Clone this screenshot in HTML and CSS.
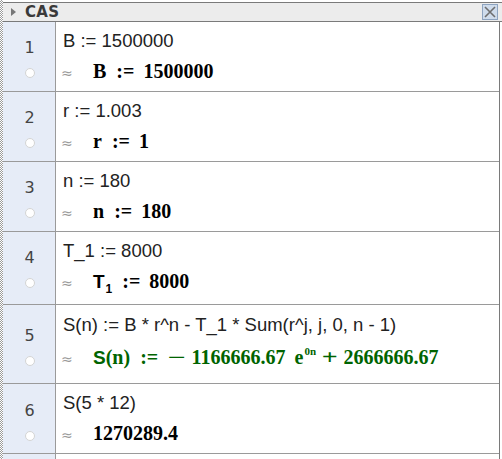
FILE: index.html
```html
<!DOCTYPE html>
<html>
<head>
<meta charset="utf-8">
<link rel="stylesheet" href="styles.css">
</head>
<body>
<div class="app">
  <div class="dots"></div>
  <div class="panel">
    <div class="header">
      <span class="tri"></span>
      <span class="title">CAS</span>
      <span class="close"><svg width="14" height="14" viewBox="0 0 14 14"><path d="M2 2 L12 12 M12 2 L2 12" stroke="#6f6f6f" stroke-width="1.6" fill="none"/></svg></span>
    </div>
    <div class="list">
      <div class="row">
        <div class="gut"><span class="num">1</span><span class="radio"></span></div>
        <div class="cell">
          <div class="inp">B := 1500000</div>
          <div class="out"><span class="ap">≈</span><span class="m">B<span class="op">:=</span>1500000</span></div>
        </div>
      </div>
      <div class="row">
        <div class="gut"><span class="num">2</span><span class="radio"></span></div>
        <div class="cell">
          <div class="inp">r := 1.003</div>
          <div class="out"><span class="ap">≈</span><span class="m">r<span class="op">:=</span>1</span></div>
        </div>
      </div>
      <div class="row">
        <div class="gut"><span class="num">3</span><span class="radio"></span></div>
        <div class="cell">
          <div class="inp">n := 180</div>
          <div class="out"><span class="ap">≈</span><span class="m">n<span class="op">:=</span>180</span></div>
        </div>
      </div>
      <div class="row r4">
        <div class="gut"><span class="num">4</span><span class="radio"></span></div>
        <div class="cell">
          <div class="inp">T_1 := 8000</div>
          <div class="out"><span class="ap">≈</span><span class="m"><span class="sans">T</span><sub>1</sub><span class="op">:=</span>8000</span></div>
        </div>
      </div>
      <div class="row r5">
        <div class="gut"><span class="num">5</span><span class="radio"></span></div>
        <div class="cell">
          <div class="inp">S(n) := B * r^n - T_1 * Sum(r^j, j, 0, n - 1)</div>
          <div class="out"><span class="ap">≈</span><span class="m green"><span class="sans">S</span>(n)<span class="op">:=</span><span class="neg">−</span>1166666.67<span class="e">e</span><sup>0n</sup><span class="plus">+</span>2666666.67</span></div>
        </div>
      </div>
      <div class="row r6">
        <div class="gut"><span class="num">6</span><span class="radio"></span></div>
        <div class="cell">
          <div class="inp">S(5 * 12)</div>
          <div class="out"><span class="ap">≈</span><span class="m">1270289.4</span></div>
        </div>
      </div>
      <div class="row">
        <div class="gut"></div>
        <div class="cell"></div>
      </div>
    </div>
  </div>
</div>
</body>
</html>
```

FILE: styles.css
```css
html, body {
  margin: 0;
  padding: 0;
  background: #ffffff;
  width: 502px;
  height: 459px;
  overflow: hidden;
}
.app {
  display: flex;
  height: 459px;
}
.dots {
  width: 3px;
  flex: none;
  background: repeating-conic-gradient(#9a9a9a 0 25%, #ffffff 0 50%) 0 0 / 2px 2px;
}
.panel {
  flex: 1;
  display: flex;
  flex-direction: column;
  padding-top: 2px;
}
.header {
  height: 21px;
  background: #ececec;
  border-top: 1px solid #7a7a7a;
  border-bottom: 1px solid #7a7a7a;
  display: flex;
  align-items: center;
  font-family: "DejaVu Sans", sans-serif;
}
.tri {
  width: 0;
  height: 0;
  border-left: 5px solid #777;
  border-top: 4px solid transparent;
  border-bottom: 4px solid transparent;
  margin-left: 8px;
  margin-right: 9px;
}
.title {
  font-size: 15px;
  font-weight: bold;
  color: #3a3a3a;
  letter-spacing: 0.3px;
}
.close {
  margin-left: auto;
  margin-right: 4px;
  width: 14px;
  height: 14px;
  border: 1px solid #8ea4c0;
  background: #cfdcec;
  display: flex;
}
.list {
  flex: 1;
  margin-right: 2px;
  border-right: 1px solid #7a7a7a;
}
.row {
  display: flex;
  height: 69px;
  border-bottom: 1px solid #9a9a9a;
}
.row.r4 { height: 72px; }
.row.r5 { height: 78px; }
.gut {
  width: 51px;
  flex: none;
  background: #e6ecf7;
  border-right: 1px solid #9a9a9a;
  display: flex;
  flex-direction: column;
  align-items: center;
  padding-left: 1px;
}
.num {
  font-family: "DejaVu Sans", sans-serif;
  font-size: 16px;
  color: #444;
  margin-top: 17px;
  line-height: 18px;
}
.r5 .num { margin-top: 22px; }
.r6 .num { margin-top: 18px; }
.radio {
  width: 8px;
  height: 8px;
  border-radius: 50%;
  background: #fff;
  border: 1px solid #d4d4d4;
  margin-top: 11px;
}
.cell {
  flex: 1;
  padding-left: 5px;
  display: flex;
  flex-direction: column;
}
.inp {
  font-family: "Liberation Sans", sans-serif;
  font-size: 18.5px;
  color: #222;
  margin-top: 9px;
  padding-left: 2px;
  line-height: 20px;
  white-space: nowrap;
}
.r5 .inp { margin-top: 10px; }
.out {
  display: flex;
  align-items: baseline;
  margin-top: 8px;
  height: 24px;
  white-space: nowrap;
}
.r5 .out { margin-top: 10px; }
.ap {
  font-family: "DejaVu Sans", sans-serif;
  font-size: 14px;
  color: #999;
  width: 32px;
}
.m {
  font-family: "Liberation Serif", serif;
  font-weight: bold;
  font-size: 20px;
  color: #000;
  line-height: 24px;
}
.sans {
  font-family: "Liberation Sans", sans-serif;
  font-size: 19px;
}
.m sub {
  font-family: "Liberation Sans", sans-serif;
  font-size: 12px;
  vertical-align: -5px;
  line-height: 0;
  margin-left: 1px;
}
.m sup {
  font-size: 11px;
  vertical-align: 9px;
  line-height: 0;
  margin-left: 1px;
}
.op {
  margin: 0 9px 0 10px;
}
.neg {
  display: inline-block;
  transform: scaleX(1.6);
  margin: 0 9px 0 4px;
}
.e {
  margin-left: 9px;
}
.plus {
  display: inline-block;
  transform: scaleX(1.4);
  margin: 0 8px 0 8px;
}
.green {
  color: #006400;
}
```
